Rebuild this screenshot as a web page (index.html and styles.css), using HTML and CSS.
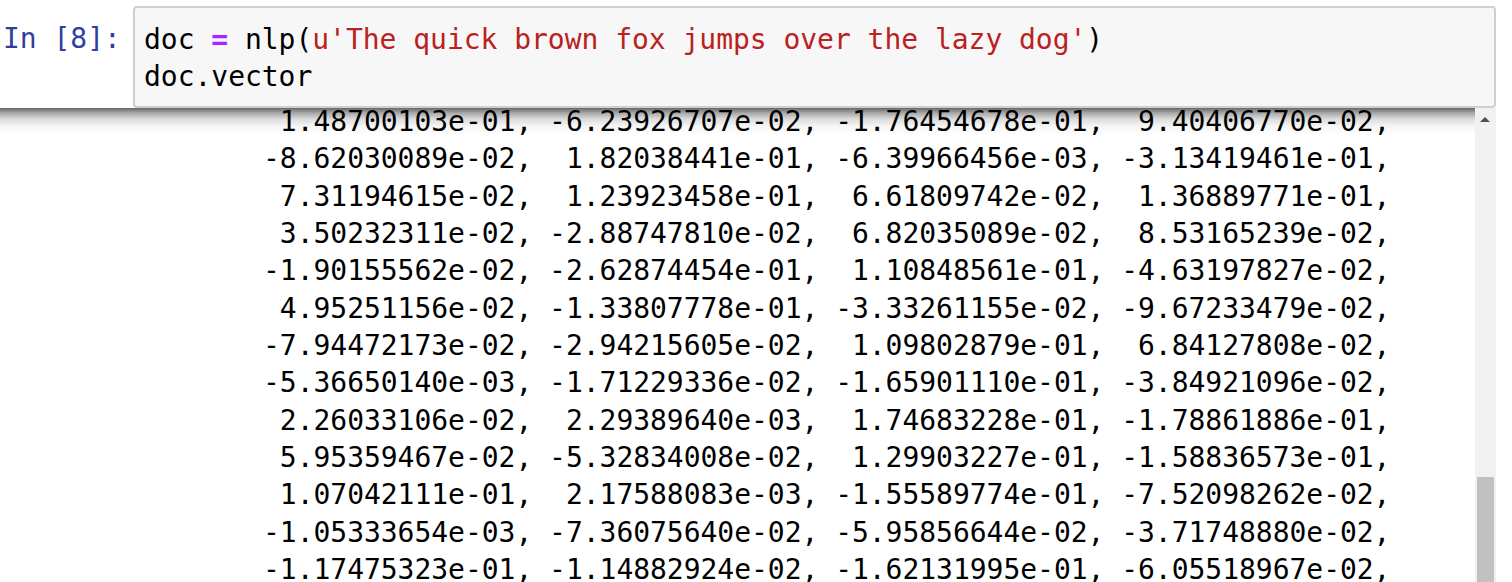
FILE: index.html
```html
<!DOCTYPE html>
<html lang="en">
<head>
<meta charset="utf-8">
<title>Notebook cell</title>
<link rel="stylesheet" href="styles.css">
</head>
<body>
<div class="notebook">
  <div class="cell">
    <div class="prompt">In [8]:</div>
    <pre class="input">doc <span class="op">=</span> nlp(<span class="str">u'The quick brown fox jumps over the lazy dog'</span>)
doc.vector</pre>
  </div>
  <div class="output">
    <pre class="values"> 1.48700103e-01, -6.23926707e-02, -1.76454678e-01,  9.40406770e-02,
-8.62030089e-02,  1.82038441e-01, -6.39966456e-03, -3.13419461e-01,
 7.31194615e-02,  1.23923458e-01,  6.61809742e-02,  1.36889771e-01,
 3.50232311e-02, -2.88747810e-02,  6.82035089e-02,  8.53165239e-02,
-1.90155562e-02, -2.62874454e-01,  1.10848561e-01, -4.63197827e-02,
 4.95251156e-02, -1.33807778e-01, -3.33261155e-02, -9.67233479e-02,
-7.94472173e-02, -2.94215605e-02,  1.09802879e-01,  6.84127808e-02,
-5.36650140e-03, -1.71229336e-02, -1.65901110e-01, -3.84921096e-02,
 2.26033106e-02,  2.29389640e-03,  1.74683228e-01, -1.78861886e-01,
 5.95359467e-02, -5.32834008e-02,  1.29903227e-01, -1.58836573e-01,
 1.07042111e-01,  2.17588083e-03, -1.55589774e-01, -7.52098262e-02,
-1.05333654e-03, -7.36075640e-02, -5.95856644e-02, -3.71748880e-02,
-1.17475323e-01, -1.14882924e-02, -1.62131995e-01, -6.05518967e-02,</pre>
    <div class="scrollbar">
      <div class="arrow"></div>
      <div class="thumb"></div>
    </div>
  </div>
</div>
</body>
</html>
```
FILE: styles.css
```css
html, body {
  margin: 0;
  padding: 0;
  height: 582px;
  overflow: hidden;
  background: #fff;
}
.notebook {
  display: flex;
  flex-direction: column;
  height: 582px;
  font-family: "DejaVu Sans Mono", monospace;
  font-size: 28px;
  letter-spacing: -0.03px;
}
.cell {
  display: flex;
  height: 108px;
  box-sizing: border-box;
  padding: 6px 16px 0 0;
  background: #fff;
}
.prompt {
  width: 133px;
  box-sizing: border-box;
  padding: 14px 0 0 3px;
  line-height: 37.33px;
  color: #303f9f;
}
pre {
  margin: 0;
  font: inherit;
}
.input {
  flex: 1;
  box-sizing: border-box;
  padding: 13px 0 0 9px;
  line-height: 37.33px;
  color: #000;
  background: #f7f7f7;
  border: 2px solid #cfcfcf;
  border-radius: 4px;
}
.op { color: #aa22ff; font-weight: bold; }
.str { color: #ba2121; }
.output {
  position: relative;
  display: flex;
  flex: 1;
  min-height: 0;
  padding-right: 16px;
}
.output::before {
  content: "";
  position: absolute;
  top: 0;
  left: 0;
  right: 37px;
  height: 28px;
  background: linear-gradient(to bottom,
    rgba(0, 0, 0, 0.6) 0,
    rgba(0, 0, 0, 0.34) 5px,
    rgba(0, 0, 0, 0.14) 11px,
    rgba(0, 0, 0, 0.04) 18px,
    rgba(0, 0, 0, 0) 28px);
}
.values {
  flex: 1;
  overflow: hidden;
  margin-top: -5px;
  padding: 0 0 0 263px;
  line-height: 37.33px;
  color: #000;
}
.scrollbar {
  position: relative;
  width: 21px;
  background: #f1f1f1;
}
.arrow {
  position: absolute;
  top: 9px;
  left: 5px;
  border-left: 5px solid transparent;
  border-right: 5px solid transparent;
  border-bottom: 5px solid #505050;
}
.thumb {
  position: absolute;
  top: 369px;
  left: 2px;
  right: 2px;
  bottom: 0;
  background: #c1c1c1;
}
```
